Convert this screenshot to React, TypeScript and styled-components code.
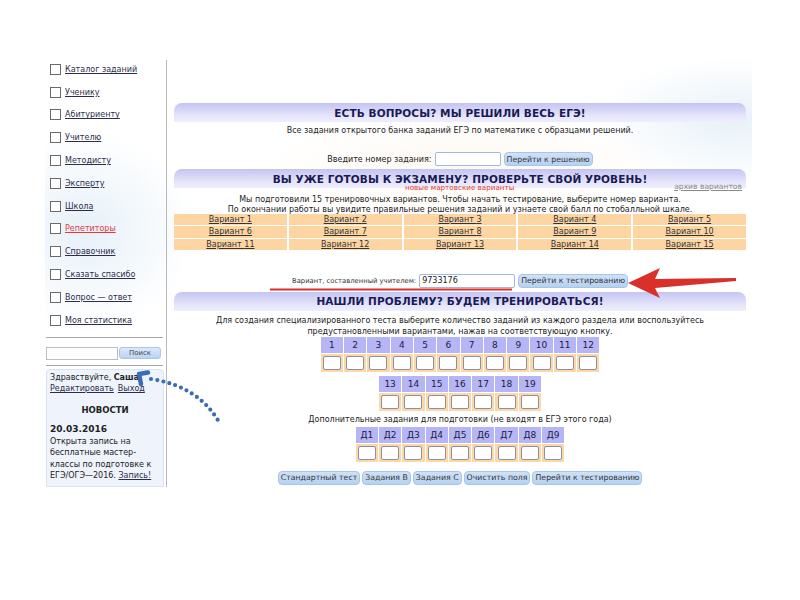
import React from "react";
import styled, { createGlobalStyle } from "styled-components";

const Global = createGlobalStyle`
  html, body { margin: 0; padding: 0; background: #ffffff; }
  body { font-family: "DejaVu Sans", Verdana, sans-serif; color: #222; }
  #root { width: 800px; height: 600px; position: relative; overflow: hidden; }
`;

const Stage = styled.div`
  position: relative;
  width: 800px;
  height: 600px;
  padding-top: 60px;
  box-sizing: border-box;
`;

const Page = styled.div`
  display: flex;
  margin-left: 45px;
  width: 707px;
  height: 427px;
  background:
    radial-gradient(ellipse 160px 140px at 40px 170px, rgba(214, 231, 244, 0.6), transparent 70%),
    radial-gradient(ellipse 200px 90px at 690px 60px, rgba(215, 232, 245, 0.6), transparent 70%),
    radial-gradient(ellipse 300px 80px at 420px 110px, rgba(250, 236, 214, 0.35), transparent 70%),
    #ffffff;
`;

const Sidebar = styled.aside`
  width: 121px;
  border-right: 1px solid #b9b9b9;
  display: flex;
  flex-direction: column;
  font-size: 8px;
`;

const NavList = styled.ul`
  list-style: none;
  margin: -2px 0 0 0;
  padding: 0 0 0 5px;
  display: flex;
  flex-direction: column;
`;

const NavItem = styled.li`
  height: 22.8px;
  display: flex;
  align-items: center;
  gap: 4px;
`;

const Check = styled.span`
  width: 9px;
  height: 9px;
  border: 1px solid #6a6a6a;
  background: #fff;
  flex: none;
`;

const NavLink = styled.a<{ $red?: boolean }>`
  color: ${(p) => (p.$red ? "#e8383a" : "#2d2d4a")};
  text-decoration: underline;
  font-size: 8px;
  white-space: nowrap;
`;

const Rule = styled.hr<{ $mt?: number }>`
  border: none;
  border-top: 1px solid #a8a8a8;
  margin: ${(p) => p.$mt ?? 0}px 3px 0 1px;
`;

const SearchRow = styled.div`
  display: flex;
  align-items: center;
  gap: 1px;
  padding: 9px 3px 5px 1px;
`;

const SearchInput = styled.div`
  width: 70px;
  height: 11px;
  border: 1px solid #bdbdbd;
  background: #fff;
`;

const SearchButton = styled.button`
  width: 42px;
  height: 12px;
  padding: 0;
  border: 1px solid #a9c6ea;
  border-radius: 3px;
  background: linear-gradient(#dbe9fb, #b9d3f3);
  font-family: "DejaVu Sans", sans-serif;
  font-size: 7px;
  color: #444;
`;

const NewsBox = styled.div`
  margin: 3px 2px 0 1px;
  flex: 1;
  background: #eef3fc;
  border: 1px solid #dbe4f2;
  border-radius: 4px 4px 0 0;
  padding: 2px 3px;
  font-size: 8px;
  line-height: 11.5px;
  color: #222;
`;

const SmallLink = styled.a`
  color: #2d2d4a;
  text-decoration: underline;
  margin-right: 4px;
`;

const NewsTitle = styled.div`
  font-weight: bold;
  font-size: 8.5px;
  text-align: center;
  margin: 10px 0 8px;
`;

const NewsDate = styled.div`
  font-weight: bold;
  font-size: 9px;
`;

const Main = styled.main`
  flex: 1;
  padding: 43px 6px 0 7px;
  display: flex;
  flex-direction: column;
  align-items: center;
  font-size: 8px;
  color: #222;
`;

const Header = styled.div`
  position: relative;
  width: 100%;
  height: 19px;
  border-radius: 8px 8px 0 0;
  background: linear-gradient(#c4c4f2, #e6e6fb 70%, #eeeefd);
  display: flex;
  align-items: center;
  justify-content: center;
  font-weight: bold;
  font-size: 10.5px;
  color: #1a1a55;
  letter-spacing: 0.1px;
`;

const HeaderNote = styled.span`
  position: absolute;
  left: 231px;
  bottom: -4px;
  font-size: 7.2px;
  font-weight: normal;
  color: #e03a3a;
  letter-spacing: 0;
`;

const HeaderArchive = styled.a`
  position: absolute;
  right: 4px;
  bottom: -3px;
  font-size: 7.6px;
  font-weight: normal;
  color: #8a8a8a;
  text-decoration: underline;
  letter-spacing: 0;
`;

const Para = styled.p<{ $mt?: number; $lh?: number }>`
  margin: ${(p) => p.$mt ?? 0}px 0 0;
  text-align: center;
  line-height: ${(p) => p.$lh ?? 10}px;
`;

const FormRow = styled.div<{ $mt?: number }>`
  margin-top: ${(p) => p.$mt ?? 0}px;
  display: flex;
  align-items: center;
  gap: 3px;
`;

const NarrowLabel = styled.span`
  font-size: 6.8px;
  color: #333;
`;

const TextInput = styled.div<{ $w: number }>`
  width: ${(p) => p.$w}px;
  height: 12px;
  border: 1px solid #9fb8dc;
  border-radius: 2px;
  background: #fff;
  font-size: 8px;
  line-height: 12px;
  padding-left: 2px;
  box-sizing: content-box;
`;

const Btn = styled.button`
  height: 14px;
  padding: 0 2px;
  border: 1px solid #a7c4ea;
  border-radius: 4px;
  background: linear-gradient(#cfe1f7, #b7d1f1);
  font-family: "DejaVu Sans", sans-serif;
  font-size: 7.8px;
  color: #333;
  white-space: nowrap;
`;

const VariantTable = styled.div`
  margin-top: 0;
  width: 100%;
  display: grid;
  grid-template-columns: repeat(5, 1fr);
  gap: 1px 2px;
`;

const VariantCell = styled.div`
  background: #fdd5a2;
  height: 11.3px;
  display: flex;
  align-items: center;
  justify-content: center;
  font-size: 8px;
`;

const VariantLink = styled.a`
  color: #333;
  text-decoration: underline;
`;

const TeacherRow = styled(FormRow)`
  padding-bottom: 4px;
`;

const Grid = styled.div<{ $cols: number; $mt?: number }>`
  margin-top: ${(p) => p.$mt ?? 0}px;
  display: grid;
  grid-template-columns: repeat(${(p) => p.$cols}, 22.3px);
  gap: 1px 1px;
`;

const LabelCell = styled.div`
  height: 16px;
  background: #b6b6f6;
  display: flex;
  align-items: center;
  justify-content: center;
  font-size: 9px;
  color: #1c1c40;
`;

const InputCell = styled.div`
  height: 18px;
  background: #fcd8a8;
  display: flex;
  align-items: center;
  justify-content: center;
`;

const InputBox = styled.div`
  width: 16px;
  height: 12px;
  background: #fff;
  border: 1px solid #8f8f9f;
  border-radius: 2px;
`;

const ButtonsRow = styled.div`
  margin-top: 9px;
  display: flex;
  gap: 2px;
`;

const Overlay = styled.svg`
  position: absolute;
  left: 0;
  top: 0;
  pointer-events: none;
`;

const nav = [
  "Каталог заданий",
  "Ученику",
  "Абитуриенту",
  "Учителю",
  "Методисту",
  "Эксперту",
  "Школа",
  "Репетиторы",
  "Справочник",
  "Сказать спасибо",
  "Вопрос — ответ",
  "Моя статистика",
];

function TaskGrid({ labels, mt }: { labels: string[]; mt?: number }) {
  return (
    <Grid $cols={labels.length} $mt={mt}>
      {labels.map((l) => (
        <LabelCell key={"l" + l}>{l}</LabelCell>
      ))}
      {labels.map((l) => (
        <InputCell key={"i" + l}>
          <InputBox />
        </InputCell>
      ))}
    </Grid>
  );
}

export default function App() {
  const row1 = Array.from({ length: 12 }, (_, i) => String(i + 1));
  const row2 = Array.from({ length: 7 }, (_, i) => String(i + 13));
  const row3 = Array.from({ length: 9 }, (_, i) => "Д" + (i + 1));
  return (
    <Stage>
      <Global />
      <Page>
        <Sidebar>
          <NavList>
            {nav.map((n) => (
              <NavItem key={n}>
                <Check />
                <NavLink $red={n === "Репетиторы"}>{n}</NavLink>
              </NavItem>
            ))}
          </NavList>
          <Rule $mt={5} />
          <SearchRow>
            <SearchInput />
            <SearchButton>Поиск</SearchButton>
          </SearchRow>
          <Rule />
          <NewsBox>
            <div>
              Здравствуйте, <b>Саша</b>
            </div>
            <div>
              <SmallLink>Редактировать</SmallLink>
              <SmallLink>Выход</SmallLink>
            </div>
            <NewsTitle>НОВОСТИ</NewsTitle>
            <NewsDate>20.03.2016</NewsDate>
            <div>Открыта запись на</div>
            <div>бесплатные мастер-</div>
            <div>классы по подготовке к</div>
            <div>
              ЕГЭ/ОГЭ—2016. <SmallLink>Запись!</SmallLink>
            </div>
          </NewsBox>
        </Sidebar>
        <Main>
          <Header>ЕСТЬ ВОПРОСЫ? МЫ РЕШИЛИ ВЕСЬ ЕГЭ!</Header>
          <Para $mt={4}>Все задания открытого банка заданий ЕГЭ по математике с образцами решений.</Para>
          <FormRow $mt={16}>
            <span>Введите номер задания:</span>
            <TextInput $w={62} />
            <Btn>Перейти к решению</Btn>
          </FormRow>
          <div style={{ height: 3, width: "100%" }} />
          <Header>
            ВЫ УЖЕ ГОТОВЫ К ЭКЗАМЕНУ? ПРОВЕРЬТЕ СВОЙ УРОВЕНЬ!
            <HeaderNote>новые мартовские варианты</HeaderNote>
            <HeaderArchive>архив вариантов</HeaderArchive>
          </Header>
          <Para $mt={7} $lh={9.5}>
            Мы подготовили 15 тренировочных вариантов. Чтобы начать тестирование, выберите номер варианта.
          </Para>
          <Para $lh={9.5}>
            По окончании работы вы увидите правильные решения заданий и узнаете свой балл по стобалльной шкале.
          </Para>
          <VariantTable>
            {Array.from({ length: 15 }, (_, i) => (
              <VariantCell key={i}>
                <VariantLink>Вариант {i + 1}</VariantLink>
              </VariantCell>
            ))}
          </VariantTable>
          <TeacherRow $mt={24}>
            <NarrowLabel>Вариант, составленный учителем:</NarrowLabel>
            <TextInput $w={92}>9733176</TextInput>
            <Btn>Перейти к тестированию</Btn>
          </TeacherRow>
          <Header>НАШЛИ ПРОБЛЕМУ? БУДЕМ ТРЕНИРОВАТЬСЯ!</Header>
          <Para $mt={4} $lh={11}>
            Для создания специализированного теста выберите количество заданий из каждого раздела или воспользуйтесь
            <br />
            предустановленными вариантами, нажав на соответствующую кнопку.
          </Para>
          <TaskGrid labels={row1} mt={0} />
          <TaskGrid labels={row2} mt={4} />
          <Para $mt={4}>Дополнительные задания для подготовки (не входят в ЕГЭ этого года)</Para>
          <TaskGrid labels={row3} mt={2} />
          <ButtonsRow>
            <Btn>Стандартный тест</Btn>
            <Btn>Задания В</Btn>
            <Btn>Задания С</Btn>
            <Btn>Очистить поля</Btn>
            <Btn>Перейти к тестированию</Btn>
          </ButtonsRow>
        </Main>
      </Page>
      <Overlay width="800" height="600" viewBox="0 0 800 600">
        <line x1="270" y1="289.5" x2="512" y2="289.5" stroke="#d9302a" strokeWidth="2" />
        <path d="M628,283 L660,268 L655,279 L736,278 L736,281 L655,288 L660,298 Z" fill="#d9302a" />
        <path
          d="M151,379 Q198,386 219,422"
          fill="none"
          stroke="#3a6db5"
          strokeWidth="4.2"
          strokeLinecap="round"
          strokeDasharray="0 6.2"
        />
        <path
          d="M148,372.5 L139,374 L141,384"
          fill="none"
          stroke="#3a6db5"
          strokeWidth="4.5"
          strokeLinecap="round"
          strokeLinejoin="round"
        />
      </Overlay>
    </Stage>
  );
}
